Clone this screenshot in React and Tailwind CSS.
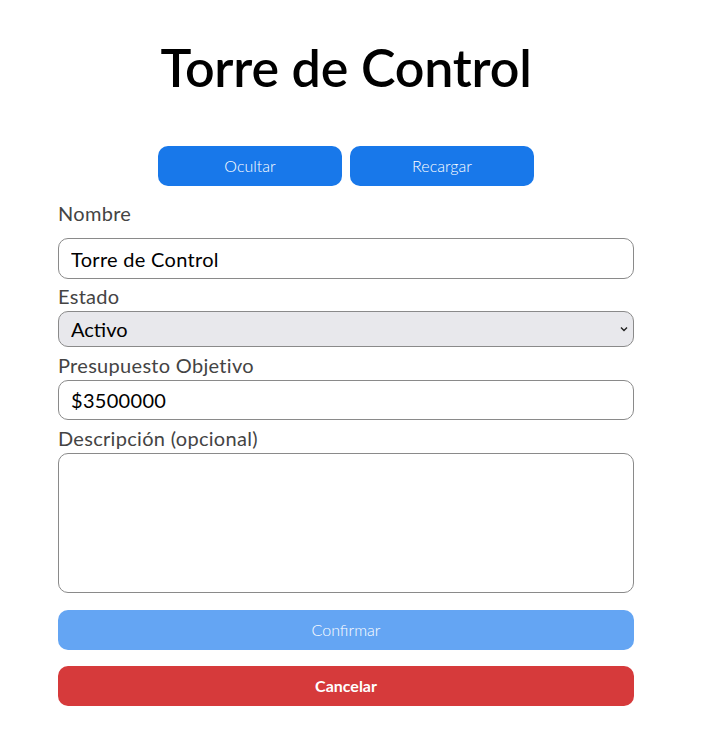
import { useState } from "react";

const font = { fontFamily: '"Lato", "Noto Sans", sans-serif' };

export default function App() {
  const [nombre, setNombre] = useState("Torre de Control");
  const [estado, setEstado] = useState("Activo");
  const [presupuesto, setPresupuesto] = useState("$3500000");
  const [descripcion, setDescripcion] = useState("");

  return (
    <div className="w-[692px] bg-white pb-8" style={font}>
      <div className="mx-auto w-[576px] flex flex-col">
        <h1 className="pt-[37px] text-center text-[52px] leading-[60px] font-semibold text-black tracking-[-0.2px]">
          Torre de Control
        </h1>

        {/* Top actions */}
        <div className="mt-[49px] flex justify-center gap-2">
          <button className="h-10 w-[184px] rounded-[10px] bg-[#1878ea] text-[16px] font-light text-white">
            Ocultar
          </button>
          <button className="h-10 w-[184px] rounded-[10px] bg-[#1878ea] text-[16px] font-light text-white">
            Recargar
          </button>
        </div>

        <label className="mt-[15px] text-[20px] leading-6 tracking-[0.3px] text-[#444444]">Nombre</label>
        <input
          value={nombre}
          onChange={(e) => setNombre(e.target.value)}
          className="mt-[13px] h-[41px] rounded-[10px] border border-[#8a8a8a] px-3 text-[20px] tracking-[0.3px] text-black outline-none"
        />

        <label className="mt-[5px] text-[20px] leading-6 tracking-[0.3px] text-[#444444]">Estado</label>
        <div className="relative mt-[3px]">
          <select
            value={estado}
            onChange={(e) => setEstado(e.target.value)}
            className="h-[36px] w-full appearance-none rounded-[10px] border border-[#8a8a8a] bg-[#e8e8ec] px-3 text-[20px] text-black outline-none"
          >
            <option>Activo</option>
            <option>Inactivo</option>
          </select>
          <svg className="pointer-events-none absolute right-[6px] top-[15px]" width="8" height="6" viewBox="0 0 8 6">
            <path d="M1 1.5 L4 4.5 L7 1.5" fill="none" stroke="#222" strokeWidth="1.4" />
          </svg>
        </div>

        <label className="mt-[6px] text-[20px] leading-6 tracking-[0.3px] text-[#444444]">Presupuesto Objetivo</label>
        <input
          value={presupuesto}
          onChange={(e) => setPresupuesto(e.target.value)}
          className="mt-[3px] h-10 rounded-[10px] border border-[#8a8a8a] px-3 text-[20px] tracking-[0.3px] text-black outline-none"
        />

        <label className="mt-[6px] text-[20px] leading-6 tracking-[0.3px] text-[#444444]">Descripción (opcional)</label>
        <textarea
          value={descripcion}
          onChange={(e) => setDescripcion(e.target.value)}
          className="mt-[3px] h-[140px] resize-none rounded-[10px] border border-[#8a8a8a] px-3 py-2 text-[20px] text-black outline-none"
        />

        <button className="mt-[17px] h-10 rounded-[10px] bg-[#64a5f3] text-[16px] font-light text-white">
          Confirmar
        </button>
        <button className="mt-[16px] h-10 rounded-[10px] bg-[#d63a3b] text-[16px] font-bold text-white">
          Cancelar
        </button>
      </div>
    </div>
  );
}
